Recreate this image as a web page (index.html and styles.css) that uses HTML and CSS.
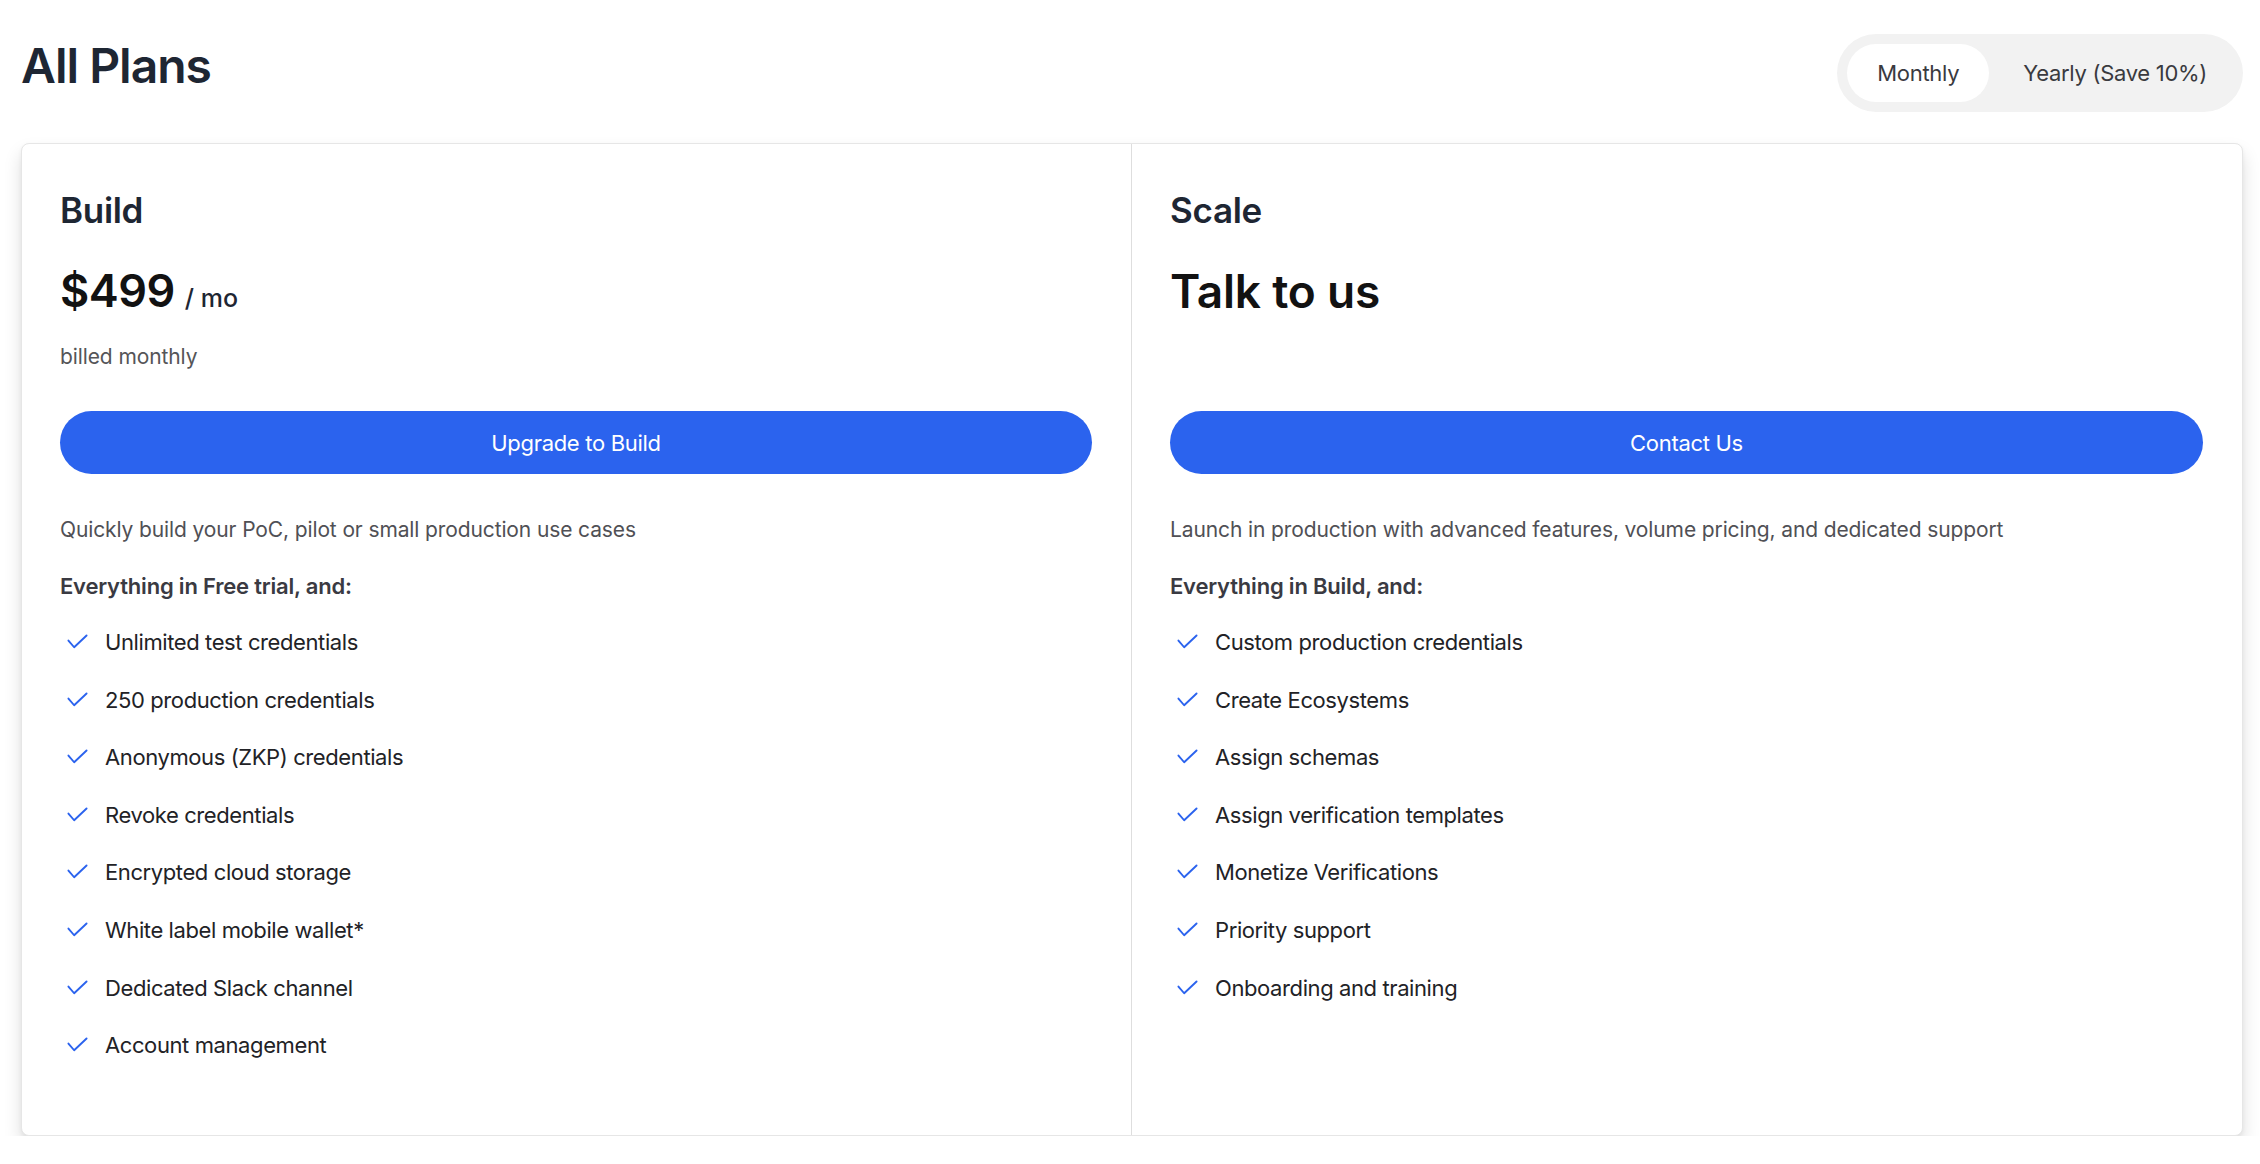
FILE: index.html
```html
<!DOCTYPE html>
<html lang="en">
<head>
<meta charset="utf-8">
<title>All Plans</title>
<link rel="stylesheet" href="styles.css">
</head>
<body>
<div class="page">
  <header class="header">
    <h1 class="title">All Plans</h1>
    <div class="toggle">
      <button class="toggle-btn is-active">Monthly</button>
      <button class="toggle-btn">Yearly (Save 10%)</button>
    </div>
  </header>

  <section class="plans">
    <div class="plan plan-left">
      <h2 class="plan-name">Build</h2>
      <div class="price"><span class="amount">$499</span><span class="per">/ mo</span></div>
      <p class="billing">billed monthly</p>
      <button class="cta">Upgrade to Build</button>
      <p class="desc">Quickly build your PoC, pilot or small production use cases</p>
      <p class="includes">Everything in Free trial, and:</p>
      <ul class="features">
        <li><svg class="check" viewBox="0 0 22 16"><path d="M1.5 6.5 L7.5 13.5 L20.5 1.2"/></svg>Unlimited test credentials</li>
        <li><svg class="check" viewBox="0 0 22 16"><path d="M1.5 6.5 L7.5 13.5 L20.5 1.2"/></svg>250 production credentials</li>
        <li><svg class="check" viewBox="0 0 22 16"><path d="M1.5 6.5 L7.5 13.5 L20.5 1.2"/></svg>Anonymous (ZKP) credentials</li>
        <li><svg class="check" viewBox="0 0 22 16"><path d="M1.5 6.5 L7.5 13.5 L20.5 1.2"/></svg>Revoke credentials</li>
        <li><svg class="check" viewBox="0 0 22 16"><path d="M1.5 6.5 L7.5 13.5 L20.5 1.2"/></svg>Encrypted cloud storage</li>
        <li><svg class="check" viewBox="0 0 22 16"><path d="M1.5 6.5 L7.5 13.5 L20.5 1.2"/></svg>White label mobile wallet*</li>
        <li><svg class="check" viewBox="0 0 22 16"><path d="M1.5 6.5 L7.5 13.5 L20.5 1.2"/></svg>Dedicated Slack channel</li>
        <li><svg class="check" viewBox="0 0 22 16"><path d="M1.5 6.5 L7.5 13.5 L20.5 1.2"/></svg>Account management</li>
      </ul>
    </div>
    <div class="plan plan-right">
      <h2 class="plan-name">Scale</h2>
      <div class="price"><span class="amount amount-text">Talk to us</span></div>
      <p class="billing billing-empty">&nbsp;</p>
      <button class="cta">Contact Us</button>
      <p class="desc">Launch in production with advanced features, volume pricing, and dedicated support</p>
      <p class="includes">Everything in Build, and:</p>
      <ul class="features">
        <li><svg class="check" viewBox="0 0 22 16"><path d="M1.5 6.5 L7.5 13.5 L20.5 1.2"/></svg>Custom production credentials</li>
        <li><svg class="check" viewBox="0 0 22 16"><path d="M1.5 6.5 L7.5 13.5 L20.5 1.2"/></svg>Create Ecosystems</li>
        <li><svg class="check" viewBox="0 0 22 16"><path d="M1.5 6.5 L7.5 13.5 L20.5 1.2"/></svg>Assign schemas</li>
        <li><svg class="check" viewBox="0 0 22 16"><path d="M1.5 6.5 L7.5 13.5 L20.5 1.2"/></svg>Assign verification templates</li>
        <li><svg class="check" viewBox="0 0 22 16"><path d="M1.5 6.5 L7.5 13.5 L20.5 1.2"/></svg>Monetize Verifications</li>
        <li><svg class="check" viewBox="0 0 22 16"><path d="M1.5 6.5 L7.5 13.5 L20.5 1.2"/></svg>Priority support</li>
        <li><svg class="check" viewBox="0 0 22 16"><path d="M1.5 6.5 L7.5 13.5 L20.5 1.2"/></svg>Onboarding and training</li>
      </ul>
    </div>
  </section>
</div>
</body>
</html>
```

FILE: styles.css
```css
* {
  box-sizing: border-box;
}

html, body {
  margin: 0;
  padding: 0;
  background: #ffffff;
}

body {
  font-family: Inter, "Liberation Sans", sans-serif;
  color: #1f2328;
}

.page {
  padding: 34px 17px 0 21px;
}

.header {
  display: flex;
  justify-content: space-between;
  align-items: flex-start;
}

.title {
  margin: 1px 0 0 0;
  font-size: 48px;
  line-height: 62px;
  font-weight: 600;
  color: #1e2633;
  letter-spacing: -1px;
}

.toggle {
  display: flex;
  height: 78px;
  padding: 10px;
  background: #f2f2f2;
  border-radius: 39px;
}

.toggle-btn {
  height: 58px;
  padding: 0 30px;
  border: 0;
  border-radius: 29px;
  background: transparent;
  font-family: inherit;
  font-size: 22px;
  letter-spacing: -0.3px;
  color: #3a3a3f;
  cursor: pointer;
}

.toggle-btn.is-active {
  background: #ffffff;
}

.toggle-btn + .toggle-btn {
  margin-left: 8px;
  padding: 0 26px;
}

.plans {
  margin-top: 31px;
  display: grid;
  grid-template-columns: 1fr 1fr;
  border: 1px solid #e6e6e6;
  border-radius: 8px;
  background: #ffffff;
  box-shadow: 0 10px 18px rgba(0, 0, 0, 0.13), 0 2px 4px rgba(0, 0, 0, 0.05);
}

.plan {
  padding: 45px 39px 75px 38px;
  display: flex;
  flex-direction: column;
}

.plan-left {
  border-right: 1px solid #dedede;
}

.plan-name {
  margin: 0;
  font-size: 35px;
  line-height: 42px;
  font-weight: 600;
  color: #1e2633;
  letter-spacing: -0.3px;
}

.price {
  margin-top: 33px;
  height: 54px;
  display: flex;
  align-items: baseline;
  color: #121212;
}

.amount {
  font-size: 45px;
  line-height: 54px;
  font-weight: 600;
  letter-spacing: -0.5px;
}

.amount-text {
  font-size: 46px;
  letter-spacing: -0.2px;
}

.per {
  margin-left: 10px;
  font-size: 25px;
  font-weight: 500;
  color: #1e2633;
}

.billing {
  margin: 24px 0 0 0;
  font-size: 21px;
  line-height: 30px;
  color: #555558;
  letter-spacing: -0.1px;
}

.cta {
  margin-top: 39px;
  height: 63px;
  width: 100%;
  border: 0;
  border-radius: 32px;
  background: #2b63ee;
  color: #ffffff;
  font-family: inherit;
  font-size: 22px;
  letter-spacing: -0.3px;
  cursor: pointer;
}

.desc {
  margin: 41px 0 0 0;
  font-size: 21px;
  line-height: 30px;
  color: #505055;
  letter-spacing: -0.12px;
}

.includes {
  margin: 26px 0 0 0;
  font-size: 22px;
  line-height: 30px;
  font-weight: 600;
  color: #3a3a42;
  letter-spacing: -0.2px;
}

.features {
  list-style: none;
  margin: 26px 0 0 0;
  padding: 0;
  display: flex;
  flex-direction: column;
  gap: 27.6px;
}

.features li {
  display: flex;
  align-items: center;
  font-size: 22px;
  line-height: 30px;
  color: #222226;
  letter-spacing: -0.4px;
}

.check {
  width: 21px;
  height: 16px;
  margin: 0 17px 0 7px;
  fill: none;
  stroke: #2b63ee;
  stroke-width: 2;
  stroke-linecap: round;
  stroke-linejoin: round;
  flex-shrink: 0;
}
```
